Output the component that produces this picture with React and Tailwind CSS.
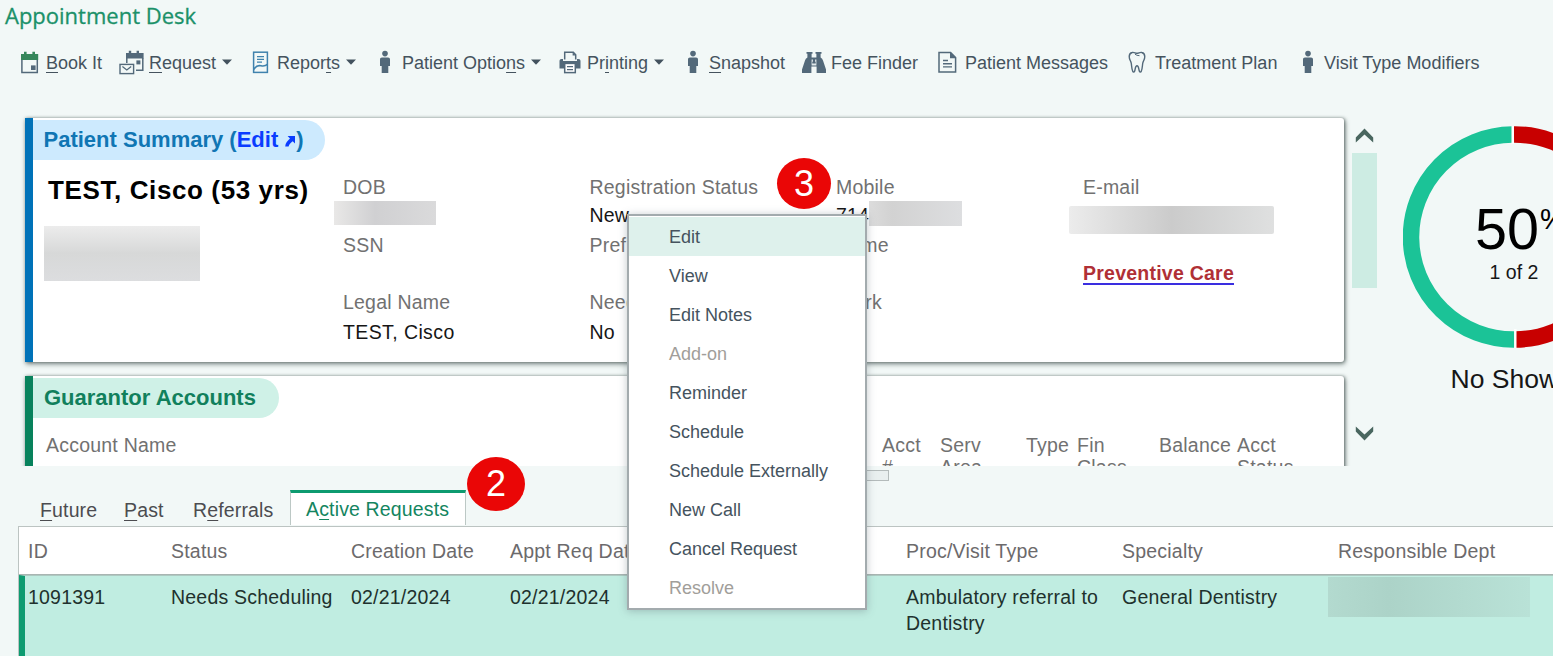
const INK = '#53697a';

function CalendarIcon() {
  return (
    <svg width="19" height="23" viewBox="0 0 19 23">
      <path d="M1 3h3V0.8h2.6V3h5.8V0.8H15V3h3.2v6H1z" fill="#36875b" />
      <path d="M1.9 9v12.6h15.4V9" fill="none" stroke={INK} strokeWidth="1.5" />
      <rect x="11" y="14.4" width="4.6" height="4.6" fill={INK} />
    </svg>
  );
}

function RequestIcon() {
  return (
    <svg width="26" height="25" viewBox="0 0 26 25">
      <path d="M7 3h2.8V0.8h2.4V3h5.4V0.8H20V3h4.6v5.4H7z" fill={INK} />
      <path d="M7.8 8v5M23.8 8v12.2H17" fill="none" stroke={INK} strokeWidth="1.5" />
      <rect x="17.4" y="10.4" width="4" height="4" fill={INK} />
      <rect x="1" y="14.4" width="13.6" height="9.2" fill="#f2f8f7" stroke={INK} strokeWidth="1.4" />
      <path d="M3.4 16.6l4.4 3.4 4.4-3.4" fill="none" stroke={INK} strokeWidth="1.3" />
    </svg>
  );
}

function ReportIcon() {
  return (
    <svg width="17" height="23" viewBox="0 0 17 23">
      <rect x="1.6" y="1.2" width="13.8" height="20.2" fill="none" stroke="#3f82ad" strokeWidth="1.5" />
      <path d="M5 5.6h7M5 8.4h7M5 11.2h5" stroke="#3f82ad" strokeWidth="1.3" />
      <path d="M1.6 19c2.2-4.6 4.6-4.8 7.4-4.2 2.400.5 4.600.2 6.400-1.400" fill="none" stroke="#3f82ad" strokeWidth="1.5" />
    </svg>
  );
}

function PersonIcon() {
  return (
    <svg width="12" height="24" viewBox="0 0 12 24">
      <circle cx="6" cy="3.6" r="2.8" fill={INK} />
      <path d="M3 7.400h6c1.300 0 2 .8 2 2v6.600H9.300V23H2.700v-7H1V9.400c0-1.200.7-2 2-2z" fill={INK} />
    </svg>
  );
}

function PrinterIcon() {
  return (
    <svg width="22" height="23" viewBox="0 0 22 23">
      <path d="M5.700 8.500V1.300h8.600l2.400 2.400v4.800" fill="none" stroke={INK} strokeWidth="1.500" />
      <path d="M13.600 1v3.400h3.200z" fill={INK} />
      <path d="M2.500 8H4v2h14V8h1.500C20.700 8 21.500 8.800 21.500 10v7.600H.5V10C.5 8.800 1.300 8 2.500 8z" fill={INK} />
      <rect x="5.700" y="12.400" width="10.600" height="9.200" fill="#fff" stroke={INK} strokeWidth="1.500" />
      <path d="M8 15.600h6M8 18.600h6" stroke={INK} strokeWidth="1.300" />
    </svg>
  );
}

function BinocularsIcon() {
  return (
    <svg width="24" height="23" viewBox="0 0 24 23">
      <path
        d="M4.500 1h6v1.800h-.9v3.600h4.800V2.800h-.9V1h6v1.800h-.9v3.600c1.400.8 1.900 1.700 2.400 3.200l3 9V22h-9.400v-6.400h-5.200V22H0v-3.400l3-9c.5-1.500 1-2.400 2.400-3.200V2.800h-.9z"
        fill={INK}
      />
      <path d="M9.600 8.600h1.300v3h2.200v-3h1.300v5.800H9.600z" fill="#dfe8ea" />
      <path d="M10.300 10.800h3.400v1.800h-3.400z" fill={INK} />
    </svg>
  );
}

function MessageIcon() {
  return (
    <svg width="19" height="23" viewBox="0 0 19 23">
      <path d="M1 1.500h11.600l5 5v14.400H1z" fill="none" stroke={INK} strokeWidth="1.500" />
      <path d="M12 1v6.200h6.200z" fill={INK} />
      <path d="M5 9.500h5M5 12.700h9M5 15.900h9" stroke={INK} strokeWidth="1.400" />
    </svg>
  );
}

function ToothIcon() {
  return (
    <svg width="18" height="23" viewBox="0 0 18 23">
      <path
        d="M4.200 1.500C6 1 7.300 2.300 9 2.300S12 1 13.800 1.500c2.400.6 3.300 3.300 2.700 6-.4 1.900-1.500 3-1.800 5-.4 2.600-.3 5.500-1.500 8-.3.700-1.400.7-1.700 0-.8-1.700-.6-5.700-2.500-5.700s-1.700 4-2.500 5.700c-.3.700-1.400.7-1.700 0-1.200-2.500-1.100-5.400-1.500-8-.3-2-1.400-3.100-1.800-5-.6-2.700.3-5.400 2.700-6z"
        fill="none"
        stroke={INK}
        strokeWidth="1.400"
      />
      <path d="M7 3.200c1.300.9 2.600 1.500 4.500 1.500" fill="none" stroke={INK} strokeWidth="1" />
    </svg>
  );
}

function Caret() {
  return (
    <svg width="10" height="6" viewBox="0 0 10 6" className="ml-[6px] shrink-0">
      <path d="M0 .4h10L5 5.800z" fill="#43525e" />
    </svg>
  );
}

const U = ({ children }) => (
  <span className="underline decoration-1 underline-offset-[3px] [text-decoration-skip-ink:none]">{children}</span>
);

const tools = [
  { w: 'w-[99px]', iw: 'w-[26px]', Icon: CalendarIcon, label: <><U>B</U>ook It</> },
  { w: 'w-[133px]', iw: 'w-[30px]', Icon: RequestIcon, label: <><U>R</U>equest</>, menu: true },
  { w: 'w-[127px]', iw: 'w-[25px]', Icon: ReportIcon, label: <>Repor<U>t</U>s</>, menu: true },
  { w: 'w-[180px]', iw: 'w-[23px]', Icon: PersonIcon, label: <>Patient Optio<U>n</U>s</>, menu: true },
  { w: 'w-[128px]', iw: 'w-[28px]', Icon: PrinterIcon, label: <>Pr<U>i</U>nting</>, menu: true },
  { w: 'w-[116px]', iw: 'w-[22px]', Icon: PersonIcon, label: <><U>S</U>napshot</> },
  { w: 'w-[135px]', iw: 'w-[28px]', Icon: BinocularsIcon, label: 'Fee Finder', nudge: '-ml-[1px] mr-[1px]' },
  { w: 'w-[190px]', iw: 'w-[27px]', Icon: MessageIcon, label: 'Patient Messages' },
  { w: 'w-[174px]', iw: 'w-[27px]', Icon: ToothIcon, label: 'Treatment Plan' },
  { w: 'w-[190px]', iw: 'w-[22px]', Icon: PersonIcon, label: 'Visit Type Modifiers' },
];

function Toolbar() {
  return (
    <div className="flex h-6 items-center pl-5 text-[18px] leading-6 text-[#45535e]">
      {tools.map(({ w, iw, Icon, label, menu, nudge = '' }, i) => (
        <div key={i} className={`flex shrink-0 items-center ${w}`}>
          <span className={`flex shrink-0 ${iw} ${nudge}`}><Icon /></span>
          <span className="mt-[2px] whitespace-nowrap">{label}</span>
          {menu && <Caret />}
        </div>
      ))}
    </div>
  );
}

const rowHeights = ['h-[25px]', 'h-[32px]', 'h-[28px]', 'h-[29px]', 'h-[28px]', 'h-[32px]'];

function FieldColumn({ cells, className }) {
  return (
    <div className={`shrink-0 ${className}`}>
      {cells.map((cell, i) => (
        <div
          key={i}
          className={`flex items-center whitespace-nowrap ${rowHeights[i]} ${i % 2 ? 'text-[#161616]' : 'text-[#717171]'}`}
        >
          {cell}
        </div>
      ))}
    </div>
  );
}

const cardShadow = 'shadow-[1px_0_3px_rgba(60,75,72,0.5),1px_2px_5px_rgba(60,75,72,0.65)]';

function PatientSummary() {
  return (
    <section className={`h-[244px] w-[1319px] rounded-r-[3px] border-l-8 border-[#0072b8] bg-white pt-[2px] ${cardShadow}`}>
      <h2 className="flex h-10 w-[292px] items-center rounded-r-full bg-[#cdeafe] pb-[2px] pl-[10.500px] text-[22px] font-bold whitespace-nowrap text-[#1076b4]">
        Patient Summary (<span className="text-[#0b3cff]">Edit</span>
        <svg width="12" height="12" viewBox="0 0 12 12" className="mt-[3px] ml-[6px]">
          <path d="M3.600 1h7.400v7.400L8.700 6.200C6.600 7.800 5 9.200 4.600 11.500H1.200C1.400 8 3.600 5.600 6 3.500z" fill="#0b3cff" />
        </svg>
        )
      </h2>
      <div className="flex pt-[15px] text-[19.500px] tracking-[0.210px]">
        <div className="w-[310px] shrink-0">
          <div className="-mt-px h-8 pl-[15px] text-[26px] leading-8 font-bold tracking-[0.610px] whitespace-nowrap text-black">
            TEST, Cisco (53 yrs)
          </div>
          <div className="mt-5 ml-[11px] h-[55px] w-[156px] bg-linear-to-b from-[#ececec] via-[#d7d8d8] to-[#dcdddf]" />
        </div>
        <FieldColumn
          className="w-[246.500px]"
          cells={[
            'DOB',
            <div className="-mt-[6px] -ml-[9px] h-6 w-[102px] bg-linear-to-r from-[#e9e8e7] via-[#d0d0d2] via-40% to-[#dadadb]" />,
            'SSN',
            '',
            'Legal Name',
            <span className="tracking-[0.400px]">TEST, Cisco</span>,
          ]}
        />
        <FieldColumn className="w-[246.500px]" cells={['Registration Status', 'New', 'Pref', '', 'Need', 'No']} />
        <FieldColumn
          className="w-[247px]"
          cells={[
            'Mobile',
            <>
              714
              <div className="-mt-[6px] h-[25px] w-[93px] bg-linear-to-r from-[#dcdcdc] via-[#d2d2d2] via-25% to-[#dddee0]" />
            </>,
            'Home',
            '',
            'Work',
            '',
          ]}
        />
        <FieldColumn
          className="w-[220px]"
          cells={[
            'E-mail',
            <div className="mt-[8px] -ml-[14px] h-7 w-[205px] rounded-[2px] bg-linear-to-r from-[#ececec] via-[#cbcbcb] via-50% to-[#dfe0e0]" />,
            '',
            <span className="border-b-2 border-[#3a2ee0] leading-[19px] font-bold tracking-[0.240px] text-[#b03036]">Preventive Care</span>,
            '',
            '',
          ]}
        />
      </div>
    </section>
  );
}

function GuarantorAccounts() {
  const columns = [
    ['w-[836px]', 'Account Name', ''],
    ['w-[58px]', 'Acct', '#'],
    ['w-[86px]', 'Serv', 'Area'],
    ['w-[51px]', 'Type', ''],
    ['w-[82px]', 'Fin', 'Class'],
    ['w-[78px]', 'Balance', ''],
    ['w-[70px]', 'Acct', 'Status'],
  ];
  return (
    <section className={`mt-[14px] h-[150px] w-[1319px] rounded-r-[3px] border-l-8 border-[#08825c] bg-white pt-[2px] ${cardShadow}`}>
      <h2 className="flex h-10 w-[246px] items-center rounded-r-full bg-[#cff1e7] pb-[2px] pl-[11px] text-[22px] font-bold whitespace-nowrap text-[#11805c]">
        Guarantor Accounts
      </h2>
      <div className="flex pt-[15.500px] pl-[13px] text-[19.500px] leading-[22px] tracking-[0.220px] text-[#717171]">
        {columns.map(([w, first, second], i) => (
          <div key={i} className={`shrink-0 whitespace-nowrap ${w}`}>
            <div>{first}</div>
            <div>{second}</div>
          </div>
        ))}
      </div>
    </section>
  );
}

function Scrollbar() {
  return (
    <div className="flex w-[26px] shrink-0 flex-col items-center pt-[18px]">
      <svg width="19" height="15" viewBox="0 0 19 15">
        <path d="M.8 9.400L9.500.4l8.700 9v5.200L9.500 6.600.8 14.600z" fill="#49665f" />
      </svg>
      <div className="mt-[10px] h-[135px] w-[25px] bg-[#cdece3]" />
      <svg width="19" height="15" viewBox="0 0 19 15" className="mt-[138px]">
        <path d="M.8 5.600l8.700 9 8.700-9V.4L9.500 8.400.8.4z" fill="#49665f" />
      </svg>
    </div>
  );
}

function NoShowGauge() {
  return (
    <div className="relative ml-[26px] flex w-[222px] shrink-0 flex-col items-center pt-4">
      <svg width="222" height="222" viewBox="0 0 222 222">
        <path d="M109.500 8.500A102.500 102.500 0 0 0 111.500 213.500" fill="none" stroke="#1bc397" strokeWidth="16.500" />
        <path d="M111 8.500A102.500 102.500 0 0 1 112.500 213.500" fill="none" stroke="#c80000" strokeWidth="16.500" />
        <path d="M109.700 0v18M112.300 203v19" stroke="#fff" strokeWidth="2.400" />
      </svg>
      <div className="absolute top-[89px] left-[72px] flex items-start text-black">
        <span className="text-[57.500px] leading-[60px]">50</span>
        <span className="mt-[4px] ml-px text-[29px] leading-[32px]">%</span>
      </div>
      <div className="absolute top-[150px] w-full text-center text-[19.500px] leading-6 text-[#161616]">1 of 2</div>
      <div className="mt-[15px] -ml-[6px] text-[26.500px] leading-8 whitespace-nowrap text-[#161616]">No Shows</div>
    </div>
  );
}

function Tabs() {
  return (
    <div className="flex h-[36px] items-start text-[19.500px] leading-6 tracking-[0.150px] text-[#4c4c50]">
      <div className="w-[86px] pt-2 pl-[40px] whitespace-nowrap"><U>F</U>uture</div>
      <div className="w-[107px] pt-2 pl-[38px] whitespace-nowrap"><U>P</U>ast</div>
      <div className="w-[97px] pt-2 whitespace-nowrap">R<U>e</U>ferrals</div>
      <div className="h-[35px] w-[176px] border-x border-t-[3px] border-x-[#bcc8c5] border-t-[#0d9b70] bg-white pt-[4px] pl-[15px] whitespace-nowrap text-[#14855f]">
        A<U>c</U>tive Requests
      </div>
    </div>
  );
}

const requestGrid = 'grid grid-cols-[143px_180px_159px_396px_216px_216px_214px]';

function RequestTable() {
  return (
    <div className="ml-[18px] h-[130px] border-t border-l border-[#bcc4c2] bg-white text-[19.500px] tracking-[0.210px]">
      <div className={`${requestGrid} h-12 items-center border-b border-[#a9b5b2] pt-[2px] pl-[9px] whitespace-nowrap text-[#6c6a6c]`}>
        <span>ID</span>
        <span>Status</span>
        <span>Creation Date</span>
        <span>Appt Req Date</span>
        <span>Proc/Visit Type</span>
        <span>Specialty</span>
        <span>Responsible Dept</span>
      </div>
      <div className={`${requestGrid} h-[81px] border-t border-l-[6px] border-t-[#adc9c1] border-l-[#0d9b70] bg-[#c0ede1] pl-[3px] leading-[26px] text-[#20312d]`}>
        <span className="pt-[8px]">1091391</span>
        <span className="pt-[8px] whitespace-nowrap">Needs Scheduling</span>
        <span className="pt-[8px]">02/21/2024</span>
        <span className="pt-[8px]">02/21/2024</span>
        <span className="w-[204px] pt-[8px]">Ambulatory referral to Dentistry</span>
        <span className="pt-[8px] whitespace-nowrap">General Dentistry</span>
        <span className="mt-px -ml-[10px] h-10 w-[202px] bg-linear-to-r from-[#b3dacf] via-[#acd3c8] via-30% to-[#b9e2d7]" />
      </div>
    </div>
  );
}

const menuItems = ['Edit', 'View', 'Edit Notes', 'Add-on', 'Reminder', 'Schedule', 'Schedule Externally', 'New Call', 'Cancel Request', 'Resolve'];
const disabledItems = ['Add-on', 'Resolve'];

function ContextMenu() {
  return (
    <ul className="absolute top-[214px] left-[627px] h-[396px] w-[240px] border-2 border-[#a3abae] bg-white pt-px text-[18px] leading-[39px] shadow-[0_1px_8px_rgba(80,95,105,0.35)]">
      {menuItems.map((item, i) => (
        <li
          key={item}
          className={`h-[39px] pt-px pl-[40px] ${i === 0 ? 'bg-[#def1ec]' : ''} ${disabledItems.includes(item) ? 'text-[#a19e9a]' : 'text-[#45535e]'}`}
        >
          {item}
        </li>
      ))}
    </ul>
  );
}

function StepBadge({ className, children }) {
  return (
    <div className={`absolute flex items-center justify-center rounded-[50%] bg-[#ea0606] text-[36px] leading-none text-white ${className}`}>
      {children}
    </div>
  );
}

export default function App() {
  return (
    <main className="relative h-[656px] w-full overflow-hidden bg-[#f2f8f7] font-['Liberation_Sans',Arial,sans-serif]">
      <h1 className="h-[50px] pl-[5px] font-['Open_Sans','Noto_Sans',sans-serif] text-[22px] leading-[30px] text-[#1b9169] [-webkit-text-stroke:0.3px_#1b9169]">
        Appointment Desk
      </h1>
      <Toolbar />
      <div className="mt-9 flex h-[356px] w-[1700px]">
        <div className="h-[356px] w-[1351px] shrink-0 overflow-hidden pt-2 pl-[25px]">
          <PatientSummary />
          <GuarantorAccounts />
        </div>
        <Scrollbar />
        <NoShowGauge />
      </div>
      <div className="flex h-[24px] pt-1">
        <div className="ml-[700px] h-[11px] w-[189px] border border-[#b4bbbb] bg-[#e9efef]" />
      </div>
      <Tabs />
      <RequestTable />
      <ContextMenu />
      <StepBadge className="top-[158px] left-[777px] h-[51px] w-[54px]">3</StepBadge>
      <StepBadge className="top-[457px] left-[467px] h-[54px] w-[58px]">2</StepBadge>
    </main>
  );
}
